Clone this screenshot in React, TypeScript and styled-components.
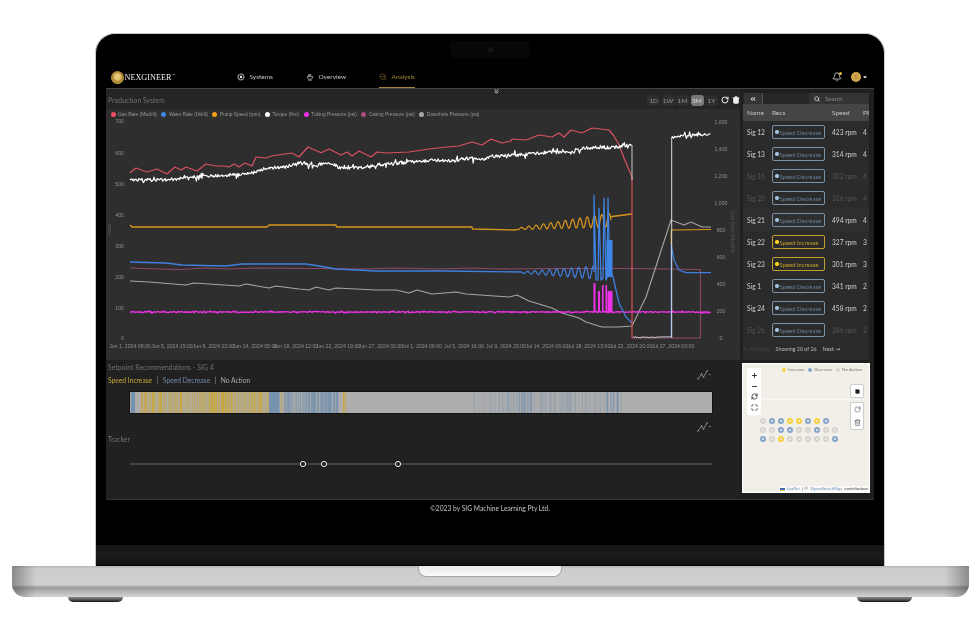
import * as React from 'react'
import styled, { createGlobalStyle } from 'styled-components'
import { Bell, ChevronsDown, Maximize, Minus, Plus, RefreshCw, RotateCw, Search, Square, Trash2, ZoomOut } from 'lucide-react'
import { FaAngleDoubleLeft, FaCaretDown } from 'react-icons/fa'

const GlobalStyle = createGlobalStyle`
  * { box-sizing: border-box; }
  html, body { margin: 0; padding: 0; background: #fff; }
  body { font-family: Lato, "Open Sans", "Liberation Sans", sans-serif; }
`

/* chart data, all in screen px since the svg viewBox matches the page */
type Pt = [number, number]

let seed = 42
const rnd = () => {
  seed = (seed * 16807) % 2147483647
  return seed / 2147483647
}

const at = (pts: Pt[], x: number) => {
  for (let i = 1; i < pts.length; i++) {
    if (x <= pts[i][0]) {
      const [x0, y0] = pts[i - 1]
      const [x1, y1] = pts[i]
      return y0 + ((y1 - y0) * (x - x0)) / (x1 - x0 || 1)
    }
  }
  return pts[pts.length - 1][1]
}

const toPath = (pts: Pt[]) =>
  pts.map(([x, y], i) => `${i ? 'L' : 'M'}${x.toFixed(1)} ${y.toFixed(1)}`).join(' ')

const noisy = (pts: Pt[], from: number, to: number, amp: number, spike: number) => {
  const out: Pt[] = []
  for (let x = from; x <= to; x += 0.8) {
    const big = rnd() > 0.86 ? spike : amp
    out.push([x, at(pts, x) + (rnd() - 0.5) * 2 * big])
  }
  return out
}

const wave = (from: number, to: number, c0: number, c1: number, a0: number, a1: number) => {
  const out: Pt[] = []
  for (let x = from; x <= to; x += 0.5) {
    const t = (x - from) / (to - from)
    out.push([x, c0 + (c1 - c0) * t + Math.sin((x - from) * 0.86) * (a0 + (a1 - a0) * t)])
  }
  return out
}

const gasPts: Pt[] = [
  [131, 172.7], [137, 168], [148, 172], [158, 169], [168, 174], [176, 167], [182, 170], [187, 167], [198, 171],
  [207, 164], [217, 166], [225, 166], [230, 167], [235, 164], [240, 167], [246, 163], [253, 166], [257, 157],
  [267, 158], [272, 156], [293, 153], [300, 157], [309, 147], [322, 152.7], [330, 149], [342, 155], [348, 152],
  [353, 156], [360, 151], [372, 157], [378, 152], [387, 153], [410, 152], [430, 149], [448, 147], [460, 146],
  [473, 142], [483, 145], [492, 139], [503, 143], [512, 141], [513, 139], [527, 140], [540, 135], [553, 137],
  [560, 133], [565, 137], [572, 130], [583, 133], [593, 128], [610, 130], [615, 136], [620, 145], [625, 158],
  [633, 177], [633, 338],
]

const torqueBase: Pt[] = [
  [131, 180], [167, 180], [197, 177], [217, 176], [253, 173], [270, 168], [287, 167], [300, 163], [310, 165],
  [333, 163], [340, 168], [360, 168], [377, 165], [403, 163], [423, 161], [443, 160], [453, 161], [470, 158],
  [480, 160], [500, 156], [520, 155], [553, 152], [573, 153], [582, 148], [603, 148], [620, 147], [633, 145],
]
const torqueHigh = noisy(torqueBase, 131, 633, 1.6, 4.5)
const torqueLow = noisy([[633, 337], [650, 337.5], [672, 336.5]], 634, 672, 0.5, 1)
const torqueLate = noisy([[673, 137], [690, 135], [712, 134.5]], 673, 712, 1.2, 4)

const pumpFlat: Pt[] = [
  [131, 225], [133, 227], [268, 227], [270, 225], [337, 225], [337.5, 227], [473, 227], [473.5, 229], [517, 230],
]
const pumpWave = wave(517, 612, 229, 220, 0.8, 7)
const pumpEnd: Pt[] = [[612, 217], [613, 216.5], [633, 214]]
const pumpLate: Pt[] = [[672.3, 245], [672.3, 230], [712, 229.5]]

const blueFlat: Pt[] = [
  [131, 262], [167, 263], [183, 265], [227, 266], [243, 264], [307, 264], [320, 266], [337, 269], [377, 271],
  [443, 271], [523, 272],
]
const blueWave = wave(523, 595, 272.5, 272.5, 0.8, 6.5)
const blueDecay: Pt[] = [[612, 272], [614, 277], [620, 303], [627, 317], [633, 323]]
const blueLate: Pt[] = [[672.3, 338], [672.3, 245], [675, 260], [680, 270], [687, 272.7], [712, 272.7]]
const blueSpikes: Pt[] = [
  [595, 272], [595, 195], [597, 280], [599, 280], [600, 208], [602, 280], [604, 278], [605, 198], [607, 280],
  [608, 278], [609, 198], [611, 277],
]

const casingPts: Pt[] = [
  [131, 268], [160, 269], [183, 269.5], [205, 268], [230, 269], [260, 268], [320, 268.5], [360, 269], [400, 268],
  [440, 269], [475, 268], [500, 269], [560, 268.5], [633, 268.5], [701.5, 269.5], [701.5, 338], [633, 338],
]

const downholePts: Pt[] = [
  [131, 281], [150, 282], [187, 285], [195, 283], [240, 286], [247, 284], [270, 288], [277, 286], [300, 289],
  [310, 290], [317, 287], [330, 290], [337, 288], [377, 290], [397, 290], [410, 293], [418, 290], [433, 294],
  [457, 292], [467, 294], [510, 297], [518, 295], [530, 301], [540, 304], [553, 308], [563, 313], [580, 318],
  [587, 322], [603, 327], [620, 327], [633, 326], [647, 297], [660, 257], [672, 220], [685, 225], [692, 222],
  [703, 227], [712, 227],
]

const tubing = noisy([[131, 312], [712, 312]], 131, 712, 0.5, 1.2)
const tubingBars: [number, number, number][] = [
  [594.5, 283, 2], [599, 291, 2], [603, 285, 1.6], [606.5, 285, 1.6], [608.5, 291, 5],
]

const leftTicks: [string, number][] = [
  ['700', 121.5], ['600', 153], ['500', 184], ['400', 215], ['300', 246], ['200', 277], ['100', 308], ['0', 338],
]
const rightTicks: [string, number][] = [
  ['1,600', 121.7], ['1,400', 148.7], ['1,200', 175.7], ['1,000', 203], ['800', 230], ['600', 257], ['400', 284],
  ['200', 311], ['0', 338],
]
const timeTicks: [string, number][] = [
  ['Jun 1, 2024 08:00', 131], ['Jun 5, 2024 15:00', 173], ['Jun 9, 2024 22:00', 214.5], ['Jun 14, 2024 05:00', 256],
  ['Jun 18, 2024 12:00', 297], ['Jun 22, 2024 19:00', 339], ['Jun 27, 2024 02:00', 382], ['Jul 1, 2024 09:00', 423],
  ['Jul 5, 2024 16:00', 465], ['Jul 9, 2024 23:00', 507], ['Jul 14, 2024 06:00', 548], ['Jul 18, 2024 13:00', 590],
  ['Jul 22, 2024 20:00', 632], ['Jul 27, 2024 03:00', 674],
]

const legendItems = [
  ['Gas Rate (Mscf/d)', '#f0505f'],
  ['Water Rate (bbl/d)', '#3f86e8'],
  ['Pump Speed (rpm)', '#f5a010'],
  ['Torque (Nm)', '#ffffff'],
  ['Tubing Pressure (psi)', '#f030e8'],
  ['Casing Pressure (psi)', '#a8507c'],
  ['Downhole Pressure (psi)', '#a8a8a8'],
]

type Stripe = { x: number; w: number; color: string; o: number }
const yellow = '#c9a63a'
const blue = '#7591ae'

const makeStripes = () => {
  const out: Stripe[] = [
    { x: 131, w: 4, color: blue, o: 0.95 },
    { x: 269, w: 10.5, color: blue, o: 0.95 },
    { x: 343, w: 1.6, color: yellow, o: 0.95 },
    { x: 345.5, w: 1, color: yellow, o: 0.5 },
  ]
  for (let x = 141; x < 268; ) {
    const w = 0.6 + rnd() * 2.6
    const dense = x > 210 && x < 232
    out.push({ x, w, color: yellow, o: dense ? 0.95 : 0.35 + rnd() * 0.6 })
    x += w + rnd() * 1.4
  }
  for (let x = 280; x < 337; ) {
    const w = 0.6 + rnd() * 2.4
    out.push({ x, w, color: x < 282 ? yellow : blue, o: x > 305 ? 0.6 + rnd() * 0.4 : 0.25 + rnd() * 0.6 })
    x += w + rnd() * 1.2
  }
  for (let x = 473; x < 622; ) {
    const w = 0.6 + rnd() * 1.8
    const strong = (x > 517 && x < 530) || (x > 605 && x < 618)
    out.push({ x, w, color: blue, o: strong ? 0.7 + rnd() * 0.3 : 0.12 + rnd() * 0.4 })
    x += w + rnd() * 3
  }
  return out
}
const stripes = makeStripes()

type Rec = 'down' | 'up'
const rows: { name: string; rec: Rec; speed: string; pe: string; dim?: boolean; hover?: boolean }[] = [
  { name: 'Sig 12', rec: 'down', speed: '423 rpm', pe: '4' },
  { name: 'Sig 13', rec: 'down', speed: '314 rpm', pe: '4' },
  { name: 'Sig 16', rec: 'down', speed: '302 rpm', pe: '4', dim: true },
  { name: 'Sig 20', rec: 'down', speed: '316 rpm', pe: '4', dim: true },
  { name: 'Sig 21', rec: 'down', speed: '494 rpm', pe: '4', hover: true },
  { name: 'Sig 22', rec: 'up', speed: '327 rpm', pe: '3' },
  { name: 'Sig 23', rec: 'up', speed: '301 rpm', pe: '3' },
  { name: 'Sig 1', rec: 'down', speed: '341 rpm', pe: '2' },
  { name: 'Sig 24', rec: 'down', speed: '458 rpm', pe: '2' },
  { name: 'Sig 26', rec: 'down', speed: '286 rpm', pe: '2', dim: true },
]

type Tone = 'grey' | 'blue' | 'gold'
const g: Tone = 'grey'
const b: Tone = 'blue'
const y: Tone = 'gold'
const wells: (Tone | null)[] = [
  g, b, b, y, y, b, y, b, null,
  g, g, b, b, g, g, b, g, g,
  b, g, y, g, g, g, g, g, b,
]
const toneColor = { grey: '#d5d3cf', blue: '#85a5cb', gold: '#f8d23c' }

const TrendIcon = () => (
  <TrendSvg viewBox="0 0 14 10">
    <path d="M1 9 L4.5 4 L6.5 7 L10 1" fill="none" stroke="#999" strokeWidth="0.8" />
    <circle cx="1" cy="9" r="0.8" fill="#999" />
    <circle cx="4.5" cy="4" r="0.8" fill="#999" />
    <circle cx="6.5" cy="7" r="0.8" fill="#999" />
    <circle cx="10" cy="1" r="0.8" fill="#999" />
    <path d="M11.5 4 h2.4 l-1.2 1.3 z" fill="#999" />
  </TrendSvg>
)

const SystemsIcon = () => (
  <NavSvg viewBox="0 0 10 10">
    <circle cx="5" cy="5" r="3.6" fill="none" stroke="#bbb" strokeWidth="1.6" strokeDasharray="1.6 0.5" />
    <circle cx="5" cy="5" r="1.5" fill="#eee" />
  </NavSvg>
)

const OverviewIcon = () => (
  <NavSvg viewBox="0 0 10 10">
    <path d="M3 1.5 h3 l0.8 2 h-4.6 z" fill="#aaa" />
    <path d="M1.5 4.5 h7 a3.5 3.5 0 0 1 -7 0 z" fill="none" stroke="#bbb" strokeWidth="0.9" />
    <path d="M2.5 9 h5" stroke="#bbb" strokeWidth="0.9" />
  </NavSvg>
)

export default function App() {
  return (
    <>
      <GlobalStyle />
      <Page>
        <Lid>
          <Notch>
            <Camera />
          </Notch>
          <Nav>
            <Brand>
              <LogoCoin />
              <BrandName>
                NEXGINEER<Tm>TM</Tm>
              </BrandName>
            </Brand>
            <NavLinks>
              <NavLink>
                <SystemsIcon />
                Systems
              </NavLink>
              <NavLink>
                <OverviewIcon />
                Overview
              </NavLink>
              <NavLink $active>
                <ZoomOut size={8} strokeWidth={1.5} />
                Analysis
              </NavLink>
            </NavLinks>
            <NavRight>
              <BellWrap>
                <Bell size={10} strokeWidth={1.8} />
                <BellDot />
              </BellWrap>
              <Avatar>S</Avatar>
              <FaCaretDown size={6} />
            </NavRight>
          </Nav>
          <Main>
            <Collapse>
              <ChevronsDown size={7} strokeWidth={3} />
            </Collapse>
            <DragHandle />
            <LeftColumn>
              <ChartHeader>
                <SectionTitle>Production System</SectionTitle>
                <RangeBar>
                  {['1D', '1W', '1M', '3M', '1Y'].map((r) => (
                    <RangeButton key={r} $active={r === '3M'}>
                      {r}
                    </RangeButton>
                  ))}
                  <RotateCw size={8} strokeWidth={3} color="#eee" />
                  <Trash2 size={8} strokeWidth={2.5} color="#eee" fill="#eee" />
                </RangeBar>
              </ChartHeader>
              <ChartBox>
                <Legend>
                  {legendItems.map(([label, color]) => (
                    <LegendItem key={label}>
                      <LegendDot $color={color} />
                      {label}
                    </LegendItem>
                  ))}
                </Legend>
                <ChartSvg viewBox="107 109 634 251">
                  {leftTicks.map(([t, py]) => (
                    <AxisText key={t} x={125} y={py + 1.8} textAnchor="end">
                      {t}
                    </AxisText>
                  ))}
                  {rightTicks.map(([t, py]) => (
                    <AxisText key={t} x={722} y={py + 1.8} textAnchor="middle">
                      {t}
                    </AxisText>
                  ))}
                  {timeTicks.map(([t, px]) => (
                    <AxisText key={t} x={px} y={347.5} textAnchor="middle">
                      {t}
                    </AxisText>
                  ))}
                  <AxisName transform="translate(112 230) rotate(-90)" textAnchor="middle">
                    Value
                  </AxisName>
                  <AxisName transform="translate(732 232) rotate(90)" textAnchor="middle">
                    Gas Rate (Mscf/d)
                  </AxisName>

                  <Series d={toPath(casingPts)} $color="#8d4a68" $w={1.1} />
                  <Series d={toPath(downholePts)} $color="#a6a6a6" $w={1.1} />
                  <Series d={toPath(tubing)} $color="#f030e8" $w={1.3} />
                  {tubingBars.map(([x, top, w]) => (
                    <BarMark key={x} x={x} y={top} width={w} height={312 - top} fill="#f030e8" />
                  ))}
                  <Series d={toPath(pumpFlat)} $color="#d9961c" $w={1.3} />
                  <Series d={toPath(pumpWave)} $color="#d9961c" $w={1.2} />
                  <Series d={toPath(pumpEnd)} $color="#d9961c" $w={1.3} />
                  <Series d={toPath(pumpLate)} $color="#e09a1a" $w={1.2} />
                  <Series d={toPath(blueFlat)} $color="#3f7fe0" $w={1.4} />
                  <Series d={toPath(blueWave)} $color="#3f7fe0" $w={1.2} />
                  <Series d={toPath(blueSpikes)} $color="#3f86e8" $w={1.2} />
                  <BarMark x={607.5} y={240} width={6} height={37} fill="#3f86e8" />
                  <Series d={toPath(blueDecay)} $color="#3f7fe0" $w={1.3} />
                  <Series d={toPath(blueLate)} $color="#3f7fe0" $w={1.3} />
                  <Series d={toPath(gasPts)} $color="#d9525f" $w={1.2} />
                  <Series d={toPath(torqueHigh)} $color="#fff" $w={1.2} />
                  <Series d="M633 145 V180" $color="#ccc" $w={1} />
                  <Series d={toPath(torqueLow)} $color="#eee" $w={0.9} />
                  <Series d="M672.7 338 V137" $color="#ddd" $w={1} />
                  <Series d={toPath(torqueLate)} $color="#fff" $w={1.2} />
                </ChartSvg>
              </ChartBox>
              <BottomPanel>
                <SectionTitle>Setpoint Recommendations - SIG 4</SectionTitle>
                <KeyRow>
                  <KeyText $color="#c6a437">Speed Increase</KeyText>
                  <KeySep>|</KeySep>
                  <KeyText $color="#6f88a6">Speed Decrease</KeyText>
                  <KeySep>|</KeySep>
                  <KeyText $color="#a8a8a8">No Action</KeyText>
                  <KeyTrend>
                    <TrendIcon />
                  </KeyTrend>
                </KeyRow>
                <RecBar viewBox="130 0 582 21" preserveAspectRatio="none">
                  <rect x="130" y="0" width="582" height="21" fill="#adadad" />
                  {stripes.map((s, i) => (
                    <BarMark key={i} x={s.x} y={0} width={s.w} height={21} fill={s.color} opacity={s.o} />
                  ))}
                </RecBar>
                <TrackerHead>
                  <TrendSlot>
                    <TrendIcon />
                  </TrendSlot>
                  <SectionTitle>Tracker</SectionTitle>
                </TrackerHead>
                <TrackerSvg viewBox="130 0 582 10">
                  <line x1="130" x2="712" y1="5" y2="5" stroke="#666" strokeWidth="1" />
                  {[303, 324, 398].map((cx) => (
                    <circle key={cx} cx={cx} cy={5} r={2.6} fill="#222" stroke="#eee" strokeWidth="1" />
                  ))}
                </TrackerSvg>
              </BottomPanel>
            </LeftColumn>

            <RightColumn>
              <SideTable>
                <TableTools>
                  <BackTab>
                    <FaAngleDoubleLeft size={6} />
                  </BackTab>
                  <SearchBox>
                    <Search size={6} strokeWidth={3} color="#ddd" />
                    Search
                  </SearchBox>
                </TableTools>
                <HeadRow>
                  <span>Name</span>
                  <span>Recs</span>
                  <span>Speed</span>
                  <span>PE</span>
                </HeadRow>
                {rows.map((r) => (
                  <Row key={r.name} $dim={r.dim} $hover={r.hover}>
                    <span>{r.name}</span>
                    <Badge $rec={r.rec}>
                      <BadgeDot $rec={r.rec} />
                      {r.rec === 'up' ? 'Speed Increase' : 'Speed Decrease'}
                    </Badge>
                    <span>{r.speed}</span>
                    <span>{r.pe}</span>
                  </Row>
                ))}
                <Pager>
                  <PagerDim>← Previous</PagerDim>
                  <span>Showing 20 of 26</span>
                  <span>Next →</span>
                </Pager>
              </SideTable>
              <MapBox>
                <MapSeam />
                <MapLegend>
                  <MapKey>
                    <MapKeyDot $tone="gold" />
                    Increase
                  </MapKey>
                  <MapKey>
                    <MapKeyDot $tone="blue" />
                    Decrease
                  </MapKey>
                  <MapKey>
                    <MapKeyDot $tone="grey" />
                    No Action
                  </MapKey>
                </MapLegend>
                <ZoomControl>
                  <Plus size={7} strokeWidth={3} />
                  <Minus size={7} strokeWidth={3} />
                  <RefreshCw size={7} strokeWidth={2.5} />
                  <Maximize size={7} strokeWidth={2.5} />
                </ZoomControl>
                <DrawControl>
                  <Square size={5} fill="#222" />
                </DrawControl>
                <EditControl>
                  <RotateCw size={7} strokeWidth={2} />
                  <Trash2 size={7} strokeWidth={2} />
                </EditControl>
                <WellGrid>
                  {wells.map((w, i) => (w ? <Well key={i} $tone={w} /> : <span key={i} />))}
                </WellGrid>
                <Attribution>
                  <Flag />
                  <AttrLink>Leaflet</AttrLink> | © <AttrLink>OpenStreetMap</AttrLink> contributors
                </Attribution>
              </MapBox>
            </RightColumn>
          </Main>
          <Footer>©2023 by SIG Machine Learning Pty Ltd.</Footer>
          <ChinBand />
        </Lid>
        <Base>
          <ThumbNotch />
        </Base>
        <Feet>
          <Foot />
          <Foot />
        </Feet>
      </Page>
    </>
  )
}

const Page = styled.div`
  width: 980px;
  height: 635px;
  background: #fff;
  overflow: hidden;
  display: flex;
  flex-direction: column;
  align-items: center;
  padding-top: 33px;
`

const Lid = styled.div`
  position: relative;
  width: 790px;
  height: 533px;
  flex: none;
  background: #000;
  border: 1px solid #c9c9c9;
  border-bottom: none;
  border-radius: 20px 20px 0 0;
  display: flex;
  flex-direction: column;
  padding: 0 10px;
  color: #ccc;
  filter: blur(0.3px);
`

const Notch = styled.div`
  position: absolute;
  left: 354px;
  top: 7px;
  width: 80px;
  height: 17px;
  background: #070707;
  border-radius: 0 0 5px 5px;
  display: flex;
  align-items: center;
  justify-content: center;
`

const Camera = styled.div`
  width: 5px;
  height: 5px;
  border-radius: 50%;
  background: #141414;
`

const Nav = styled.header`
  height: 55px;
  flex: none;
  display: flex;
  align-items: flex-end;
  padding: 0 6px 0 5px;
  border-bottom: 1px solid #444;
`

const Brand = styled.div`
  width: 125px;
  height: 22px;
  display: flex;
  align-items: center;
  gap: 0.5px;
`

const LogoCoin = styled.div`
  width: 13px;
  height: 13px;
  border-radius: 50%;
  background: radial-gradient(circle at 50% 45%, #e8c877 0 25%, #a67f2c 55%, #e4c06a 80%, #8b6a22 100%);
`

const BrandName = styled.div`
  font-family: 'Liberation Serif', serif;
  font-size: 8.2px;
  color: #f0f0f0;
  display: flex;
  align-items: flex-start;
`

const Tm = styled.span`
  font-size: 2.5px;
  line-height: 4px;
`

const NavLinks = styled.nav`
  display: flex;
  height: 22px;
  margin-left: 1px;
`

const NavLink = styled.div<{ $active?: boolean }>`
  display: flex;
  align-items: center;
  gap: 4.5px;
  height: 22px;
  font-size: 6.5px;
  margin-right: 33px;
  color: ${(p) => (p.$active ? '#a5863a' : '#c4c4c4')};
  border-bottom: 1px solid ${(p) => (p.$active ? '#a5863a' : 'transparent')};
  &:last-child {
    margin-right: 0;
  }
`

const NavSvg = styled.svg`
  width: 8px;
  height: 8px;
`

const NavRight = styled.div`
  margin-left: auto;
  height: 22px;
  display: flex;
  align-items: center;
  gap: 1px;
  color: #eee;
`

const BellWrap = styled.div`
  position: relative;
  display: flex;
  margin-right: 8px;
`

const BellDot = styled.span`
  position: absolute;
  top: 0;
  right: 0;
  width: 3px;
  height: 3px;
  border-radius: 50%;
  background: #e6b93e;
`

const Avatar = styled.div`
  width: 10px;
  height: 10px;
  border-radius: 50%;
  background: #d2a64a;
  color: #a37f28;
  font-size: 6px;
  line-height: 10px;
  text-align: center;
`

const Main = styled.main`
  position: relative;
  height: 411px;
  flex: none;
  background: #1f1f1f;
  display: grid;
  grid-template-columns: 634px 130px;
  column-gap: 3px;
  border-bottom: 1px solid #333;
`

const Collapse = styled.div`
  position: absolute;
  left: 387px;
  top: -1px;
  display: flex;
  color: #eee;
`

const DragHandle = styled.div`
  position: absolute;
  left: 0;
  top: 213px;
  width: 3px;
  height: 4px;
  border-radius: 50%;
  background: #ddd;
`

const LeftColumn = styled.div`
  display: flex;
  flex-direction: column;
  min-width: 0;
`

const ChartHeader = styled.div`
  height: 20px;
  flex: none;
  background: #252525;
  display: flex;
  align-items: center;
  justify-content: space-between;
  padding: 2px 0 0 2px;
`

const SectionTitle = styled.div`
  font-size: 6.7px;
  color: #737373;
  letter-spacing: 0.1px;
`

const RangeBar = styled.div`
  display: flex;
  align-items: center;
  gap: 1.5px;
  svg {
    margin-left: 1.5px;
  }
`

const RangeButton = styled.div<{ $active?: boolean }>`
  width: 13px;
  height: 11px;
  border-radius: 3px;
  font-size: 6.5px;
  line-height: 11px;
  text-align: center;
  color: ${(p) => (p.$active ? '#ddd' : '#999')};
  background: ${(p) => (p.$active ? '#777' : '#2e2e2e')};
`

const ChartBox = styled.div`
  position: relative;
  height: 251px;
  flex: none;
  background: #2e2e2e;
`

const Legend = styled.div`
  position: absolute;
  left: 4.5px;
  top: 3px;
  display: flex;
  gap: 4.5px;
  font-family: 'Liberation Sans', sans-serif;
  font-size: 4.8px;
  color: #999;
`

const LegendItem = styled.div`
  display: flex;
  align-items: center;
  gap: 2.5px;
`

const LegendDot = styled.span<{ $color: string }>`
  width: 5px;
  height: 5px;
  border-radius: 50%;
  background: ${(p) => p.$color};
`

const ChartSvg = styled.svg`
  display: block;
  width: 634px;
  height: 251px;
`

const AxisText = styled.text`
  font-family: 'Liberation Sans', sans-serif;
  font-size: 5.2px;
  fill: #8f8f8f;
`

const AxisName = styled(AxisText)`
  fill: #555;
`

const Series = styled.path<{ $color: string; $w: number }>`
  fill: none;
  stroke: ${(p) => p.$color};
  stroke-width: ${(p) => p.$w}px;
  stroke-linejoin: round;
`

const BarMark = styled.rect``

const BottomPanel = styled.div`
  flex: 1;
  background: #212121;
  padding: 3px 2px 0;
  display: flex;
  flex-direction: column;
`

const KeyRow = styled.div`
  display: flex;
  align-items: center;
  height: 11px;
  margin-top: 3px;
  font-size: 6.7px;
`

const KeyText = styled.span<{ $color: string }>`
  color: ${(p) => p.$color};
`

const KeySep = styled.span`
  color: #999;
  margin: 0 4.5px;
`

const TrendSlot = styled.div`
  margin-left: auto;
  margin-right: 27px;
  display: flex;
`

const KeyTrend = styled(TrendSlot)`
  margin-top: -10px;
`

const TrendSvg = styled.svg`
  width: 14px;
  height: 10px;
`

const RecBar = styled.svg`
  display: block;
  flex: none;
  width: 582px;
  height: 21px;
  margin: 7px 0 0 22px;
  outline: 1px solid #111;
`

const TrackerHead = styled.div`
  display: flex;
  flex-direction: column;
  margin-top: 9px;
  gap: 3px;
`

const TrackerSvg = styled.svg`
  display: block;
  width: 582px;
  height: 10px;
  margin: 16px 0 0 22px;
  overflow: visible;
`

const RightColumn = styled.div`
  display: flex;
  flex-direction: column;
  min-width: 0;
`

const SideTable = styled.section`
  margin-top: 4px;
  width: 126px;
  height: 267px;
  flex: none;
  background: #2b2b2b;
  overflow: hidden;
  display: flex;
  flex-direction: column;
`

const TableTools = styled.div`
  height: 11px;
  flex: none;
  display: flex;
  justify-content: space-between;
  background: #262626;
`

const BackTab = styled.div`
  width: 19px;
  background: #353535;
  border-right: 1px solid #555;
  display: flex;
  align-items: center;
  justify-content: center;
  color: #ddd;
  margin-left: 1px;
`

const SearchBox = styled.div`
  width: 60px;
  background: #333;
  display: flex;
  align-items: center;
  gap: 5px;
  padding-left: 5px;
  font-size: 6px;
  color: #888;
`

const rowColumns = '25px 60px 31px 1fr'

const HeadRow = styled.div`
  height: 17px;
  flex: none;
  background: #454545;
  display: grid;
  grid-template-columns: ${rowColumns};
  align-items: center;
  padding-left: 4px;
  font-size: 6.5px;
  color: #c6c6c6;
  white-space: nowrap;
`

const Row = styled.div<{ $dim?: boolean; $hover?: boolean }>`
  height: 22px;
  flex: none;
  display: grid;
  grid-template-columns: ${rowColumns};
  align-items: center;
  padding-left: 4px;
  font-size: 6.6px;
  white-space: nowrap;
  color: ${(p) => (p.$dim ? '#555' : '#cfcfcf')};
  background: ${(p) => (p.$hover ? '#2f2f2f' : 'transparent')};
`

const Badge = styled.div<{ $rec: Rec }>`
  width: 53px;
  height: 14px;
  display: flex;
  align-items: center;
  gap: 1px;
  padding-left: 2px;
  border: 1px solid ${(p) => (p.$rec === 'up' ? '#c4a02c' : '#7a92a9')};
  border-radius: 2px;
  font-size: 5.9px;
  color: ${(p) => (p.$rec === 'up' ? '#c4a02c' : '#66809b')};
  white-space: nowrap;
`

const BadgeDot = styled.span<{ $rec: Rec }>`
  width: 3.5px;
  height: 3.5px;
  flex: none;
  border-radius: 50%;
  background: ${(p) => (p.$rec === 'up' ? '#ffd21f' : '#a3c4e2')};
`

const Pager = styled.div`
  height: 16px;
  flex: none;
  display: flex;
  align-items: center;
  gap: 6px;
  font-size: 5.3px;
  color: #b8b8b8;
  white-space: nowrap;
`

const PagerDim = styled.span`
  color: #444;
  margin-right: 0;
`

const MapBox = styled.section`
  position: relative;
  margin: 3px 0 0 -1px;
  width: 128px;
  height: 130px;
  flex: none;
  background: #f2efe9;
  border: 1px solid #fff;
  overflow: hidden;
`

const MapSeam = styled.div`
  position: absolute;
  left: 0;
  right: 0;
  top: 35px;
  height: 1px;
  background: #f8f6f2;
`

const MapLegend = styled.div`
  position: absolute;
  top: 3px;
  right: 7px;
  display: flex;
  gap: 3.5px;
  font-size: 4.5px;
  color: #777;
`

const MapKey = styled.div`
  display: flex;
  align-items: center;
  gap: 2px;
`

const MapKeyDot = styled.span<{ $tone: Tone }>`
  width: 4px;
  height: 4px;
  border-radius: 50%;
  background: ${(p) => toneColor[p.$tone]};
`

const ZoomControl = styled.div`
  position: absolute;
  left: 4px;
  top: 4px;
  width: 14px;
  height: 47px;
  background: #fff;
  border-radius: 2px;
  display: flex;
  flex-direction: column;
  align-items: center;
  justify-content: space-around;
  color: #222;
  padding: 2px 0;
`

const DrawControl = styled.div`
  position: absolute;
  right: 5px;
  top: 20px;
  width: 14px;
  height: 14px;
  background: #fff;
  border: 1px solid #ccc;
  border-radius: 2px;
  display: flex;
  align-items: center;
  justify-content: center;
  color: #222;
`

const EditControl = styled(DrawControl)`
  top: 38px;
  height: 28px;
  flex-direction: column;
  justify-content: space-around;
  color: #555;
`

const WellGrid = styled.div`
  position: absolute;
  left: 17px;
  top: 54px;
  display: grid;
  grid-template-columns: repeat(9, 6px);
  grid-auto-rows: 6px;
  gap: 3px;
`

const Well = styled.span<{ $tone: Tone }>`
  border-radius: 50%;
  border: 2px solid ${(p) => toneColor[p.$tone]};
  background: #f2efe9;
`

const Attribution = styled.div`
  position: absolute;
  right: 0;
  bottom: 0;
  display: flex;
  align-items: center;
  gap: 1.5px;
  padding: 0 1px;
  background: rgba(255, 255, 255, 0.7);
  font-size: 4.4px;
  line-height: 6px;
  color: #444;
  white-space: pre;
`

const AttrLink = styled.span`
  color: #5b86b5;
`

const Flag = styled.span`
  width: 5px;
  height: 3px;
  background: linear-gradient(#3f6fb5 50%, #f4cf3a 50%);
`

const Footer = styled.footer`
  height: 16px;
  flex: none;
  display: flex;
  align-items: center;
  justify-content: center;
  font-size: 6.7px;
  color: #c4c4c4;
`

const ChinBand = styled.div`
  position: absolute;
  left: 0;
  right: 0;
  bottom: 0;
  height: 21px;
  background: linear-gradient(#141414, #1c1c1c 50%, #121212);
  border-bottom: 1px solid #000;
`

const Base = styled.div`
  position: relative;
  width: 957px;
  height: 31px;
  flex: none;
  border-radius: 0 0 13px 13px;
  background:
    linear-gradient(90deg, rgba(70, 70, 70, 0.5), transparent 2.5%, transparent 97.5%, rgba(70, 70, 70, 0.5)),
    linear-gradient(#b5b6b5, #cbcccb 8%, #d0d1d0 60%, #9a9a9a 70%, #b0b0b0 80%, #cfcfcf 97%);
  display: flex;
  justify-content: center;
`

const ThumbNotch = styled.div`
  width: 144px;
  height: 11px;
  background: linear-gradient(#e8e8e8, #fbfbfb);
  border-radius: 0 0 8px 8px;
  border: 1px solid #a5a5a5;
  border-top: none;
`

const Feet = styled.div`
  width: 844px;
  display: flex;
  justify-content: space-between;
`

const Foot = styled.div`
  width: 55px;
  height: 5px;
  border-radius: 0 0 6px 6px;
  background: linear-gradient(#8a8a8a, #555 55%, #111);
`
